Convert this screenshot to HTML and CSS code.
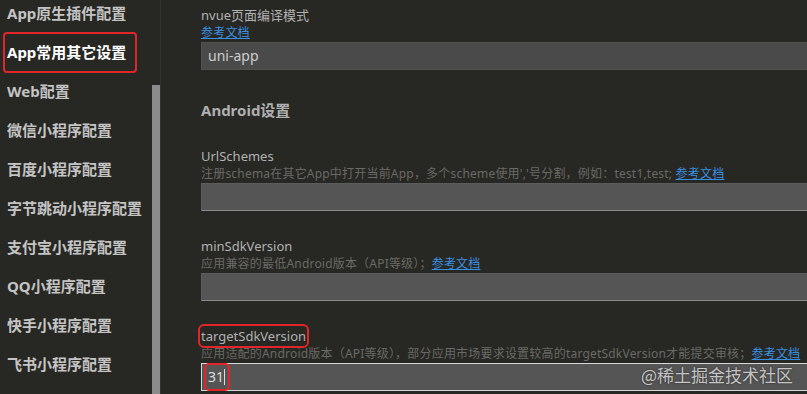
FILE: index.html
```html
<!DOCTYPE html>
<html lang="zh-CN">
<head>
    <meta charset="UTF-8">
    <title>manifest.json</title>
    <link rel="stylesheet" href="styles.css">
</head>
<body>
    <div class="sidebar">
        <ul class="nav">
            <li>App原生插件配置</li>
            <li class="active">App常用其它设置</li>
            <li>Web配置</li>
            <li>微信小程序配置</li>
            <li>百度小程序配置</li>
            <li>字节跳动小程序配置</li>
            <li>支付宝小程序配置</li>
            <li>QQ小程序配置</li>
            <li>快手小程序配置</li>
            <li>飞书小程序配置</li>
        </ul>
        <div class="scrollbar"><div class="thumb"></div></div>
    </div>

    <div class="main">
        <div class="field first">
            <div class="label">nvue页面编译模式</div>
            <div class="desc"><a href="#">参考文档</a></div>
            <div class="input dark">uni-app</div>
        </div>

        <h2>Android设置</h2>

        <div class="field">
            <div class="label">UrlSchemes</div>
            <div class="desc">注册schema在其它App中打开当前App，多个scheme使用','号分割，例如：test1,test; <a href="#">参考文档</a></div>
            <div class="input"></div>
        </div>

        <div class="field">
            <div class="label">minSdkVersion</div>
            <div class="desc">应用兼容的最低Android版本（API等级）；<a href="#">参考文档</a></div>
            <div class="input"></div>
        </div>

        <div class="field">
            <div class="label"><span class="mark">targetSdkVersion</span></div>
            <div class="desc">应用适配的Android版本（API等级），部分应用市场要求设置较高的targetSdkVersion才能提交审核；<a href="#">参考文档</a></div>
            <div class="input focus"><span class="mark value">31</span><span class="caret"></span></div>
        </div>
    </div>

    <div class="watermark">@稀土掘金技术社区</div>
</body>
</html>
```

FILE: styles.css
```css
html, body { margin: 0; height: 100%; }
body {
    display: flex; overflow: hidden; position: relative;
    background-color: #272723; color: #b4b4b4;
    font-family: "Noto Sans", "Noto Sans CJK SC", sans-serif;
}

.sidebar { display: flex; width: 160px; flex: none; border-right: 1px solid #34342f; }
.nav { list-style: none; margin: -6px 0 0 0; padding: 0; width: 152px; }
.nav li {
    box-sizing: border-box; height: 39px; line-height: 39px;
    padding-left: 7px; font-size: 15px; font-weight: bold; color: #c4c4c4;
    white-space: nowrap;
}
.nav li.active {
    color: #fff; outline: 2px solid #e0262a; outline-offset: -1px;
    border-radius: 3px; margin-left: 4px; padding-left: 3px; width: 132px;
}
.scrollbar { width: 8px; padding-top: 85px; }
.thumb { height: 100%; background-color: #8b8b8b; }

.main { flex: 1; padding: 6px 0 0 40px; min-width: 0; }
.field { margin-bottom: 26px; }
.field.first { margin-bottom: 30px; }
.label { font-size: 13px; line-height: 18px; color: #b2b2b2; }
.desc { font-size: 12px; line-height: 18px; color: #6a6a66; white-space: nowrap; letter-spacing: 0.2px; }
.desc a { color: #3a90e0; text-decoration: underline; }
.input {
    box-sizing: border-box; height: 28px; margin-right: -4px;
    background-color: #555555; border: 1px solid #5c5c5c; border-bottom-color: #8a8a8a;
    font-size: 14px; line-height: 26px; padding-left: 6px; color: #cccccc;
    display: flex; align-items: center;
}
.input.dark { background-color: #4a4a4a; border-color: #505050; }
.input.focus { border-color: #d8d8d8; }

h2 { margin: 0 0 27px 0; font-size: 15px; line-height: 20px; font-weight: bold; color: #b0b0b0; }

.mark { outline: 2px solid #e0262a; border-radius: 3px; }
.label .mark { outline-offset: 1px; }
.value { padding: 0 4px 0 2px; margin-left: -2px; outline-offset: 0; line-height: 24px; color: #ddd; }
.caret { width: 1px; height: 16px; background: #ddd; margin-left: -4px; }

.watermark {
    position: absolute; left: 641px; top: 366px;
    font-size: 17px; line-height: 17px; color: rgba(255, 255, 255, 0.72);
    text-shadow: 0 0 2px rgba(0, 0, 0, 0.6);
    font-family: "Noto Sans CJK SC", sans-serif;
}
```
